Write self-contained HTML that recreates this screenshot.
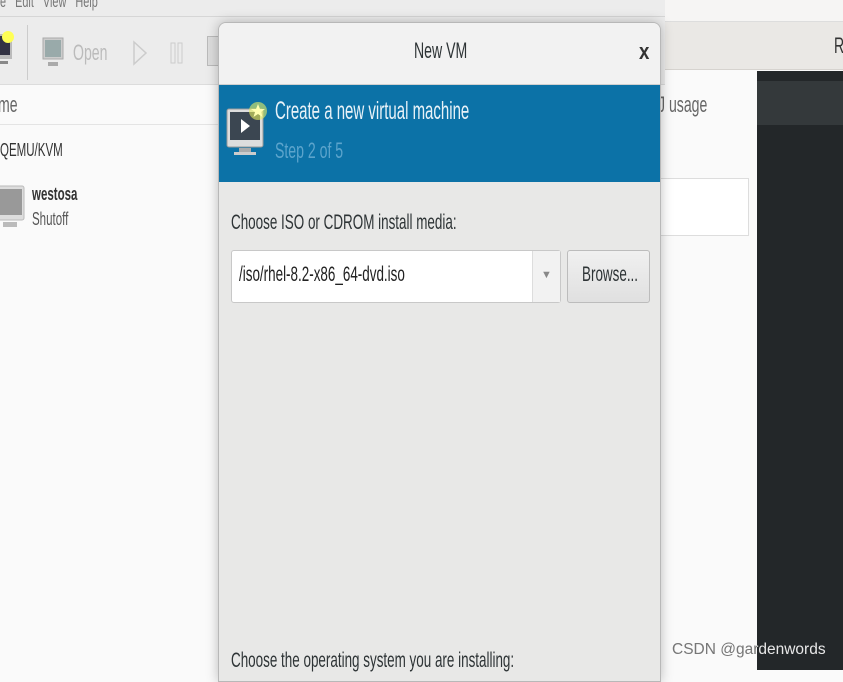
<!DOCTYPE html>
<html><head><meta charset="utf-8"><style>
*{margin:0;padding:0;box-sizing:border-box}
body{width:843px;height:670px;overflow:hidden;position:relative;background:#fafafa;font-family:"Liberation Sans",sans-serif;color:#2e3436}
.a{position:absolute}
.t{position:absolute;white-space:nowrap;transform:scaleX(.64);transform-origin:0 0}
</style></head><body>
<div class="a" style="left:0;top:0;width:665px;height:85px;background:#ececec;border-bottom:1px solid #dcdcdc"></div>
<div class="t" style="left:0;top:-8px;font-size:17px;color:#777">e &nbsp;&nbsp;Edit &nbsp;&nbsp;View &nbsp;&nbsp;Help</div>
<div class="a" style="left:0;top:16px;width:665px;height:1px;background:#d6d6d6"></div>
<svg class="a" style="left:0;top:30px" width="14" height="40"><rect x="-8" y="4" width="20" height="25" fill="#bbb"/><rect x="-6" y="6" width="16" height="19" fill="#334"/><circle cx="8" cy="7" r="6" fill="#ff5"/><rect x="-4" y="31" width="12" height="3" fill="#888"/></svg>
<div class="a" style="left:27px;top:25px;width:1px;height:55px;background:#ccc"></div>
<svg class="a" style="left:42px;top:37px" width="22" height="32"><rect x="1" y="1" width="20" height="21" fill="#ccc" stroke="#aaa"/><rect x="3" y="3" width="16" height="17" fill="#9aa"/><rect x="6" y="25" width="10" height="4" fill="#aaa"/></svg>
<div class="t" style="left:73px;top:40px;font-size:22px;color:#bbb">Open</div>
<svg class="a" style="left:132px;top:40px" width="16" height="26"><path d="M2 2 L14 13 L2 24Z" fill="none" stroke="#ccc" stroke-width="1.5"/></svg>
<svg class="a" style="left:170px;top:42px" width="14" height="22"><rect x="1" y="1" width="4" height="20" fill="none" stroke="#ccc"/><rect x="8" y="1" width="4" height="20" fill="none" stroke="#ccc"/></svg>
<div class="a" style="left:207px;top:36px;width:12px;height:30px;border:1px solid #bbb;background:#ddd"></div>
<div class="a" style="left:0;top:124px;width:660px;height:1px;background:#e4e4e4"></div>
<div class="t" style="left:-2px;top:92px;font-size:22px;color:#666">me</div>
<div class="t" style="left:0;top:140px;font-size:18px;color:#333">QEMU/KVM</div>
<svg class="a" style="left:0;top:185px" width="26" height="45"><rect x="-4" y="1" width="28" height="34" rx="2" fill="#ddd" stroke="#bbb"/><rect x="-2" y="4" width="24" height="26" fill="#999"/><rect x="3" y="37" width="14" height="5" fill="#bbb"/></svg>
<div class="t" style="left:32px;top:184px;font-size:18px;font-weight:bold;color:#333">westosa</div>
<div class="t" style="left:32px;top:209px;font-size:18px;color:#555">Shutoff</div>
<div class="t" style="left:658px;top:92px;font-size:22px;color:#666">J usage</div>
<div class="a" style="left:660px;top:178px;width:89px;height:58px;background:#fff;border:1px solid #ddd"></div>
<div class="a" style="left:665px;top:0;width:178px;height:22px;background:#f6f5f4;border-bottom:1px solid #ddd"></div>
<div class="a" style="left:665px;top:22px;width:178px;height:48px;background:#eae8e5;border-bottom:1px solid #d6d3cf"></div>
<div class="t" style="left:834px;top:33px;font-size:22px;color:#333">R</div>
<div class="a" style="left:757px;top:71px;width:86px;height:599px;background:#232729"></div>
<div class="a" style="left:757px;top:81px;width:86px;height:44px;background:#34393b"></div>
<div class="a" style="left:672px;top:641px;white-space:nowrap;font-size:15.5px;color:#e8e8e8">CSDN @gardenwords</div>
<div class="a" style="left:672px;top:641px;width:85px;overflow:hidden;white-space:nowrap;font-size:15.5px;color:#777">CSDN @gardenwords</div>
<div class="a" style="left:218px;top:22px;width:443px;height:660px;background:#e8e8e7;border:1px solid #b8b8b8;border-radius:8px 8px 0 0;box-shadow:0 0 12px rgba(0,0,0,.25);overflow:hidden">
 <div class="a" style="left:0;top:0;width:443px;height:62px;background:#f2f2f2;border-bottom:1px solid #d0d0d0"></div>
 <div class="t" style="left:195px;top:15px;font-size:22px;color:#2e3436">New VM</div>
 <div class="a" style="left:420px;top:16px;font-size:22px;font-weight:bold;color:#333;transform:scaleX(.85);transform-origin:0 0">x</div>
 <div class="a" style="left:0;top:62px;width:443px;height:97px;background:#0c72a7"></div>
 <svg class="a" style="left:6px;top:72px" width="44" height="70"><rect x="2" y="14" width="36" height="38" rx="2" fill="#ddd" stroke="#999"/><rect x="5" y="17" width="30" height="28" fill="#3b4651"/><path d="M16 24 L25 31 L16 38Z" fill="#fff"/><rect x="14" y="53" width="12" height="4" fill="#aaa"/><rect x="9" y="57" width="22" height="3" fill="#ccc"/><circle cx="33" cy="16" r="9" fill="#e8f060" opacity=".6"/><path d="M33 9 L35 14 L40 14 L36 17 L37.5 22 L33 19 L28.5 22 L30 17 L26 14 L31 14Z" fill="#ffffb0"/></svg>
 <div class="t" style="left:56px;top:74px;font-size:25px;color:#e8f2f8;transform:scaleX(.6)">Create a new virtual machine</div>
 <div class="t" style="left:56px;top:115px;font-size:22px;color:#5ca4cc">Step 2 of 5</div>
 <div class="t" style="left:12px;top:188px;font-size:21px;color:#2e3436">Choose ISO or CDROM install media:</div>
 <div class="a" style="left:12px;top:227px;width:330px;height:53px;background:#fff;border:1px solid #c8c8c8;border-radius:3px"></div>
 <div class="a" style="left:313px;top:228px;width:28px;height:51px;background:#f2f2f2;border-left:1px solid #ddd"></div>
 <div class="a" style="left:322px;top:246px;font-size:11px;color:#888">▼</div>
 <div class="t" style="left:20px;top:240px;font-size:21px;color:#222">/iso/rhel-8.2-x86_64-dvd.iso</div>
 <div class="a" style="left:348px;top:227px;width:83px;height:53px;background:linear-gradient(#f0f0f0,#e0e0e0);border:1px solid #bcbcbc;border-radius:3px"></div>
 <div class="t" style="left:363px;top:240px;font-size:21px;color:#2e3436">Browse...</div>
 <div class="t" style="left:12px;top:626px;font-size:21px;color:#2e3436">Choose the operating system you are installing:</div>
</div>
</body></html>
